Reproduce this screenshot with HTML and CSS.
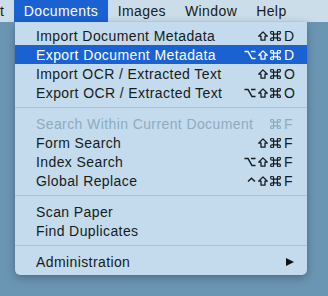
FILE: index.html
```html
<!DOCTYPE html>
<html>
<head>
<meta charset="utf-8">
<link rel="stylesheet" href="styles.css">
</head>
<body>
<svg width="0" height="0" class="defs">
  <defs>
    <symbol id="opt" viewBox="0 0 12 10"><path d="M0.5 1.5 H4 L8 8.5 H11.5 M7 1.5 H11.5" fill="none" stroke="currentColor" stroke-width="1.5"/></symbol>
    <symbol id="shift" viewBox="0 0 10 10"><path d="M5 0.9 L9.3 5.2 H7 V9.2 H3 V5.2 H0.7 Z" fill="none" stroke="currentColor" stroke-width="1.3" stroke-linejoin="round"/></symbol>
    <symbol id="cmd" viewBox="0 0 11 10"><path d="M3.6 3.2 V1.7 A1.5 1.5 0 1 0 2.1 3.2 H8.9 A1.5 1.5 0 1 0 7.4 1.7 V8.3 A1.5 1.5 0 1 0 8.9 6.8 H2.1 A1.5 1.5 0 1 0 3.6 8.3 Z" fill="none" stroke="currentColor" stroke-width="1.2"/></symbol>
    <symbol id="ctrl" viewBox="0 0 9 10"><path d="M1 5.5 L4.5 2.2 L8 5.5" fill="none" stroke="currentColor" stroke-width="1.4"/></symbol>
  </defs>
</svg>
<div class="desktop">
  <div class="menubar">
    <span class="mb-item mb-edit">Edit</span>
    <span class="mb-item mb-active">Documents</span>
    <span class="mb-item">Images</span>
    <span class="mb-item">Window</span>
    <span class="mb-item">Help</span>
  </div>
  <div class="menu">
    <div class="row"><span class="label">Import Document Metadata</span><span class="sc"><svg class="g g-shift"><use href="#shift"/></svg><svg class="g g-cmd"><use href="#cmd"/></svg><span class="key">D</span></span></div>
    <div class="row hl"><span class="label">Export Document Metadata</span><span class="sc"><svg class="g g-opt"><use href="#opt"/></svg><svg class="g g-shift"><use href="#shift"/></svg><svg class="g g-cmd"><use href="#cmd"/></svg><span class="key">D</span></span></div>
    <div class="row"><span class="label">Import OCR / Extracted Text</span><span class="sc"><svg class="g g-shift"><use href="#shift"/></svg><svg class="g g-cmd"><use href="#cmd"/></svg><span class="key">O</span></span></div>
    <div class="row"><span class="label">Export OCR / Extracted Text</span><span class="sc"><svg class="g g-opt"><use href="#opt"/></svg><svg class="g g-shift"><use href="#shift"/></svg><svg class="g g-cmd"><use href="#cmd"/></svg><span class="key">O</span></span></div>
    <div class="sep"></div>
    <div class="row dis"><span class="label">Search Within Current Document</span><span class="sc"><svg class="g g-cmd"><use href="#cmd"/></svg><span class="key">F</span></span></div>
    <div class="row"><span class="label">Form Search</span><span class="sc"><svg class="g g-shift"><use href="#shift"/></svg><svg class="g g-cmd"><use href="#cmd"/></svg><span class="key">F</span></span></div>
    <div class="row"><span class="label">Index Search</span><span class="sc"><svg class="g g-opt"><use href="#opt"/></svg><svg class="g g-shift"><use href="#shift"/></svg><svg class="g g-cmd"><use href="#cmd"/></svg><span class="key">F</span></span></div>
    <div class="row"><span class="label">Global Replace</span><span class="sc"><svg class="g g-ctrl"><use href="#ctrl"/></svg><svg class="g g-shift"><use href="#shift"/></svg><svg class="g g-cmd"><use href="#cmd"/></svg><span class="key">F</span></span></div>
    <div class="sep"></div>
    <div class="row"><span class="label">Scan Paper</span></div>
    <div class="row"><span class="label">Find Duplicates</span></div>
    <div class="sep"></div>
    <div class="row"><span class="label">Administration</span><span class="arrow"></span></div>
  </div>
</div>
</body>
</html>
```
FILE: styles.css
```css
html, body {
  margin: 0;
  padding: 0;
}
body {
  font-family: "Liberation Sans", Arial, "DejaVu Sans", sans-serif;
  font-size: 14px;
  letter-spacing: 0.4px;
  color: #161b20;
}
.defs {
  position: absolute;
  width: 0;
  height: 0;
}
.desktop {
  position: relative;
  width: 328px;
  height: 296px;
  overflow: hidden;
  background: #6b96b3;
}
.menubar {
  height: 22px;
  background: #cbdde8;
  display: flex;
  align-items: center;
  overflow: hidden;
}
.mb-item {
  height: 22px;
  line-height: 22px;
  padding: 0 9.5px;
  white-space: nowrap;
}
.mb-edit {
  margin-left: -31px;
}
.mb-active {
  background: #1a62d1;
  color: #fff;
  padding: 0 10px;
}
.menu {
  position: absolute;
  left: 15px;
  top: 22px;
  width: 292px;
  padding: 4px 0;
  background: #c3dbec;
  border-radius: 0 0 5px 5px;
  box-shadow: 0 3px 10px rgba(20, 40, 60, 0.35), 0 0 1px rgba(20, 40, 60, 0.4);
}
.row {
  height: 19px;
  display: flex;
  align-items: center;
  justify-content: space-between;
  padding: 0 12px 0 21px;
  white-space: nowrap;
}
.row.hl {
  background: #1a62d1;
  color: #fff;
}
.row.dis {
  color: #8fabbf;
}
.sc {
  display: flex;
  align-items: center;
}
.g {
  display: block;
  height: 10px;
  margin-right: 2px;
}
.g-opt { width: 12px; }
.g-shift { width: 10px; }
.g-cmd { width: 11px; margin-right: 3px; }
.g-ctrl { width: 9px; margin-right: 2px; }
.key {
  width: 11px;
}
.sep {
  height: 1px;
  margin: 5px 0 6px;
  background: #a7c2d4;
}
.arrow {
  width: 0;
  height: 0;
  border-left: 8px solid #111;
  border-top: 4px solid transparent;
  border-bottom: 4px solid transparent;
  margin-right: 1px;
}
```
